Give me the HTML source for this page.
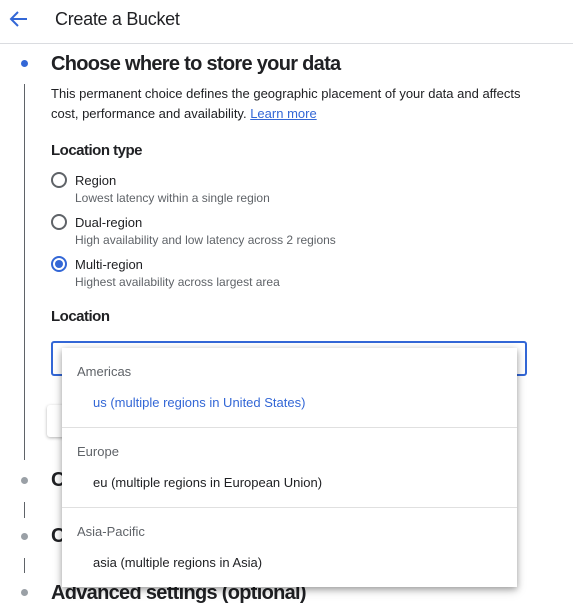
<!DOCTYPE html>
<html><head><style>
*{margin:0;padding:0;box-sizing:border-box}
body{width:573px;height:615px;overflow:hidden;background:#fff;font-family:"Liberation Sans",sans-serif;color:#202124;position:relative}
.a{position:absolute;white-space:nowrap}
.radio{position:absolute;width:16px;height:16px;border:2px solid #5f6368;border-radius:50%}
.sub{font-size:12px;color:#5f6368}
.lbl{font-size:13px}
.dd{position:absolute;left:62px;top:348px;width:455px;height:239px;background:#fff;box-shadow:0 2px 6px rgba(0,0,0,.3),0 4px 10px rgba(0,0,0,.15)}
.grp{font-size:13px;color:#5f6368}
.it{font-size:13px;color:#202124}
.hr{position:absolute;left:0;width:455px;height:1px;background:#e0e0e0}
.dot{position:absolute;width:7px;height:7px;border-radius:50%;background:#9aa0a6}
.vl{position:absolute;left:24px;width:1px;background:#5f6368}
.h{font-size:20px;font-weight:bold;letter-spacing:-0.7px}
</style></head><body>
<svg class="a" style="left:9px;top:10px" width="20" height="18" viewBox="0 0 20 18"><path d="M18 9H3M9 2L2 9l7 7" stroke="#3367d6" stroke-width="2" fill="none"/></svg>
<div class="a" style="left:55px;top:9px;font-size:18px;letter-spacing:-0.3px">Create a Bucket</div>
<div class="a" style="left:0;top:43px;width:573px;height:1px;background:#dadce0"></div>
<div class="a" style="left:21px;top:60px;width:7px;height:7px;border-radius:50%;background:#3367d6"></div>
<div class="a h" style="left:51px;top:53px">Choose where to store your data</div>
<div class="vl" style="top:84px;height:376px"></div>
<div class="a" style="left:51px;top:84px;font-size:13px;line-height:20px">This permanent choice defines the geographic placement of your data and affects<br>cost, performance and availability. <span style="color:#3367d6;text-decoration:underline">Learn more</span></div>
<div class="a" style="left:51px;top:142px;font-size:15px;font-weight:bold;letter-spacing:-0.5px">Location type</div>
<div class="radio" style="left:51px;top:172px"></div>
<div class="a lbl" style="left:75px;top:173px">Region</div>
<div class="a sub" style="left:75px;top:191px">Lowest latency within a single region</div>
<div class="radio" style="left:51px;top:214px"></div>
<div class="a lbl" style="left:75px;top:215px">Dual-region</div>
<div class="a sub" style="left:75px;top:233px">High availability and low latency across 2 regions</div>
<div class="radio" style="left:51px;top:256px;border-color:#3367d6"><div style="position:absolute;left:2px;top:2px;width:8px;height:8px;border-radius:50%;background:#3367d6"></div></div>
<div class="a lbl" style="left:75px;top:257px">Multi-region</div>
<div class="a sub" style="left:75px;top:275px">Highest availability across largest area</div>
<div class="a" style="left:51px;top:308px;font-size:15px;font-weight:bold;letter-spacing:-0.5px">Location</div>
<div class="a" style="left:51px;top:341px;width:476px;height:35px;border:2px solid #3367d6;border-radius:3px"></div>
<div class="a" style="left:47px;top:405px;width:20px;height:32px;border-radius:3px;box-shadow:0 1px 3px rgba(0,0,0,.3)"></div>
<div class="dot" style="left:21px;top:477px"></div>
<div class="a h" style="left:51px;top:469px">C</div>
<div class="vl" style="top:502px;height:16px"></div>
<div class="dot" style="left:21px;top:533px"></div>
<div class="a h" style="left:51px;top:525px">C</div>
<div class="vl" style="top:558px;height:15px"></div>
<div class="dot" style="left:21px;top:589px"></div>
<div class="a h" style="left:51px;top:582px">Advanced settings (optional)</div>
<div class="dd">
<div class="a grp" style="left:15px;top:16px">Americas</div>
<div class="a it" style="left:31px;top:47px;color:#3367d6">us (multiple regions in United States)</div>
<div class="hr" style="top:79px"></div>
<div class="a grp" style="left:15px;top:96px">Europe</div>
<div class="a it" style="left:31px;top:127px">eu (multiple regions in European Union)</div>
<div class="hr" style="top:159px"></div>
<div class="a grp" style="left:15px;top:176px">Asia-Pacific</div>
<div class="a it" style="left:31px;top:207px">asia (multiple regions in Asia)</div>
</div>
</body></html>
